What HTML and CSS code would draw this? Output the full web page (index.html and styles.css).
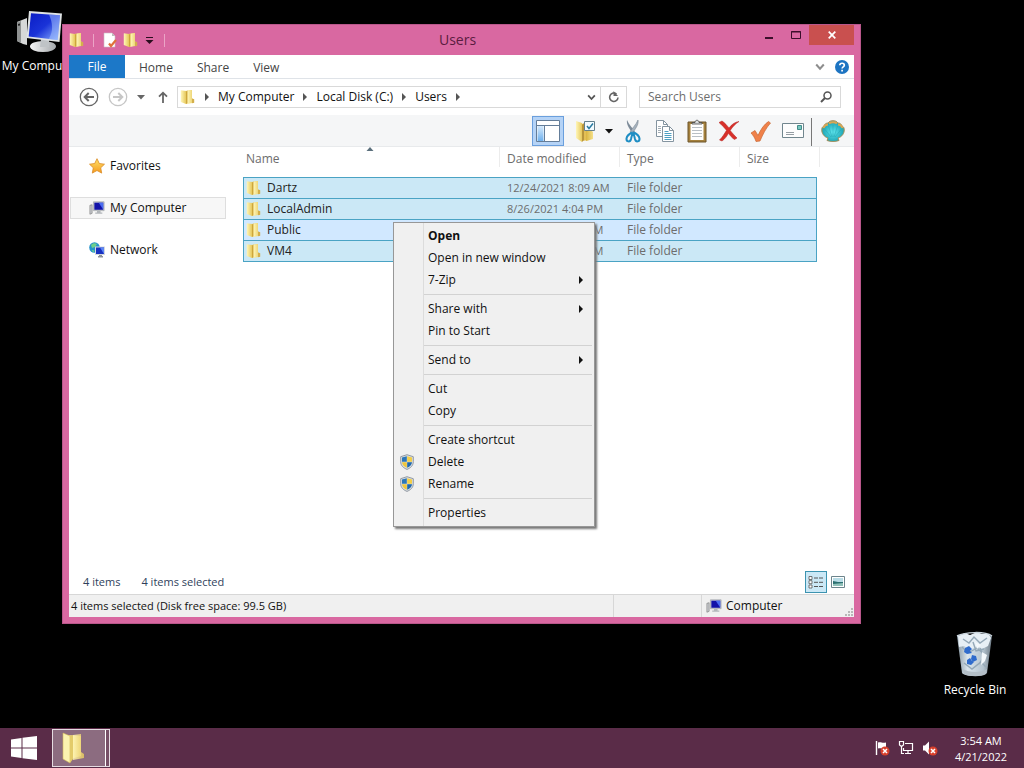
FILE: index.html
```
<!DOCTYPE html>
<html lang="en">
<head>
<meta charset="utf-8">
<title>Users</title>
<link rel="stylesheet" href="styles.css">
</head>
<body>
<svg class="defs" width="0" height="0" aria-hidden="true">
  <defs>
    <linearGradient id="gold" x1="0" x2="1"><stop offset="0" stop-color="#fff6b8"/><stop offset="1" stop-color="#e6c85c"/></linearGradient>
    <linearGradient id="goldDark" x1="0" x2="1"><stop offset="0" stop-color="#d9b440"/><stop offset="1" stop-color="#f4e08a"/></linearGradient>
    <linearGradient id="screen" x1="0" x2="1" y1="0" y2="1"><stop offset="0" stop-color="#0a1cc4"/><stop offset=".5" stop-color="#1a33d8"/><stop offset="1" stop-color="#8fb4ff"/></linearGradient>
    <linearGradient id="metal" x1="0" x2="1"><stop offset="0" stop-color="#f5f5f5"/><stop offset="1" stop-color="#a4a8ac"/></linearGradient>
    <linearGradient id="star" x1="0" x2="0" y1="0" y2="1"><stop offset="0" stop-color="#ffe36b"/><stop offset="1" stop-color="#f59a1f"/></linearGradient>
    <linearGradient id="bin" x1="0" x2="1"><stop offset="0" stop-color="#8797a3"/><stop offset=".3" stop-color="#d9e4ec"/><stop offset=".75" stop-color="#b4c3ce"/><stop offset="1" stop-color="#6d7a85"/></linearGradient>
    <radialGradient id="shell" cx=".5" cy=".55" r=".6"><stop offset="0" stop-color="#5fe6ee"/><stop offset=".7" stop-color="#25adbc"/><stop offset="1" stop-color="#8a9a68"/></radialGradient>
    <linearGradient id="pane" x1="0" x2="0" y1="0" y2="1"><stop offset="0" stop-color="#d5e9fb"/><stop offset="1" stop-color="#6fb1ee"/></linearGradient>
  </defs>
  <symbol id="folder" viewBox="0 0 16 16">
    <path d="M5 2l7-1v12.500l-6 1.500z" fill="#efd778"/>
    <path d="M.8 1.200l5.200.8v13L.8 13z" fill="url(#gold)"/>
    <path d="M6 2.500l1.600-1V14L6 15z" fill="#cda63b"/>
    <path d="M7.600 1.800L12 1v8.500l2 .8v3.400l-6.400 1z" fill="url(#gold)"/>
    <path d="M12 9.500l2.200.8v3.500l-2.200.4z" fill="#d3ae4c"/>
  </symbol>
  <symbol id="computer" viewBox="0 0 18 16">
    <path d="M1 5l2.500-.7v9.700L1 15z" fill="#c9ccd0" stroke="#777" stroke-width=".7"/>
    <path d="M5 1h12v10H5z" fill="#d0d4d8" stroke="#8b9096" stroke-width=".6"/>
    <path d="M6 2h10v8H6z" fill="#1212a8"/><path d="M11 2h5v8z" fill="#4a6cf0"/>
    <path d="M9 11h4v2h2v1.500H7V13h2z" fill="#b2b6ba"/>
  </symbol>
  <symbol id="shield" viewBox="0 0 16 16">
    <path d="M8 .7l6.300 2v5c0 4-2.800 6.300-6.300 7.700C4.500 14 1.700 11.700 1.700 7.700v-5z" fill="#d8dde2" stroke="#7d8790" stroke-width=".8"/>
    <path d="M7.800 2.200v5.600H3V3.600z" fill="#2c77b8"/><path d="M8.200 2.200v5.600H13V3.600z" fill="#f4cf45"/>
    <path d="M3 8.200h4.800v5.600C5 12.500 3.200 11 3 8.200z" fill="#f0c63a"/><path d="M13 8.200H8.200v5.600c2.800-1.300 4.600-2.800 4.800-5.600z" fill="#1f68ad"/>
  </symbol>
  <symbol id="triRight" viewBox="0 0 6 8"><path d="M1 0l4 4-4 4z" fill="currentColor"/></symbol>
  <symbol id="triDown" viewBox="0 0 8 5"><path d="M0 0h8L4 4.500z" fill="currentColor"/></symbol>
  <symbol id="chevron" viewBox="0 0 10 8"><path d="M1.200 1.500L5 5.700l3.800-4.200" fill="none" stroke="currentColor" stroke-width="2"/></symbol>
</svg>

<main class="desktop">
  <a class="shortcut shortcut-computer" href="#computer">
    <svg width="48" height="44" viewBox="0 0 48 44" aria-hidden="true">
      <path d="M1 12l10-4v27l-4-1-6-3z" fill="#d6d8d8"/><path d="M1 12l4-1v22l-4-2z" fill="#8f9292"/><path d="M2 14l2-.5v2l-2 .3z" fill="#222"/>
      <ellipse cx="27" cy="36.500" rx="13" ry="5.500" fill="url(#metal)"/><path d="M25 29l8 1v7h-9z" fill="#bfc3c6"/>
      <path d="M13 1l33 2.500-2.500 28.500-33-4z" fill="#dfe3e5"/><path d="M15 3.200l29 2-2.300 24.800-29-3.500z" fill="url(#screen)"/>
      <path d="M33 4.500l11 .7-2.300 24.800-9-1c5-8 4-16 .3-24.500z" fill="#a9c8ff" opacity=".5"/>
    </svg>
    <span>My Computer</span>
  </a>
  <a class="shortcut shortcut-bin" href="#bin">
    <svg width="40" height="48" viewBox="0 0 40 48" aria-hidden="true">
      <path d="M2 6l5 37c3 4 21 4 25 0l5-37z" fill="url(#bin)"/>
      <path d="M3 6l7-3 5 2 7-3 5 2 7 0 2 4-3 8-6 3-5-3-7 4-6-4-5 1z" fill="#e7eff5"/>
      <path d="M8 9l6 4 5-6 6 6 7-5M7 17l6 6 9-5 8 7M9 33l8 6 9-7 5 5M25 18l4 9-5 7M18 12l3 9 8-2" stroke="#94a8b7" fill="none" stroke-width="1.400"/>
      <path d="M27 22l5 3-2 6-4 4zM20 12l6 3-4 4z" fill="#f3f8fb"/>
      <path d="M10 18l4-2 3 3-2 2 2 2-5 1-3-2zM17 25l4 1 1 4-4 2-2-3zM12 30l3-2 2 3 2 1-3 3-4-1z" fill="#2f6bcc"/>
      <path d="M8 39l1 5c5 3 18 3 22 0l1-5c-5 4-18 4-24 0z" fill="#b4bfc8"/>
      <path d="M2 6c8-4 28-5 35 0" fill="none" stroke="#c9d4dc" stroke-width="1.500"/>
    </svg>
    <span>Recycle Bin</span>
  </a>

  <section class="window">
    <header class="titlebar">
      <div class="quick">
        <svg class="i16" aria-hidden="true"><use href="#folder"/></svg>
        <i class="quick-sep"></i>
        <button aria-label="Properties"><svg class="i16" viewBox="0 0 16 16"><path d="M2 1h8l3 3v11H2z" fill="#fff" stroke="#c9b9c2" stroke-width=".6"/><path d="M10 1l3 3h-3z" fill="#bbb"/><path d="M7 11.500l2 2.500 5-6" fill="none" stroke="#e0703a" stroke-width="2.200"/></svg></button>
        <button aria-label="New folder"><svg class="i16"><use href="#folder"/></svg></button>
        <button aria-label="Customize"><svg width="9" height="8" viewBox="0 0 9 8"><path d="M1 1.500h7" stroke="#2a0d1e"/><path d="M.5 4h8l-4 4z" fill="#2a0d1e"/></svg></button>
        <i class="quick-sep"></i>
      </div>
      <h1 class="title">Users</h1>
      <div class="controls">
        <button class="ctl-min" aria-label="Minimize"><svg width="10" height="10" viewBox="0 0 10 10"><path d="M1 8h8" stroke="#3c0f2b" stroke-width="2"/></svg></button>
        <button class="ctl-max" aria-label="Maximize"><svg width="12" height="10" viewBox="0 0 12 10"><path d="M1.500 1.500h9v7h-9zM1 2h10" fill="none" stroke="#3c0f2b"/></svg></button>
        <button class="ctl-close" aria-label="Close"><svg width="8" height="8" viewBox="0 0 8 8"><path d="M.7.7l6.600 6.600M7.300.7L.7 7.300" stroke="#fff" stroke-width="1.700"/></svg></button>
      </div>
    </header>

    <div class="client">
      <nav class="tabs">
        <button class="tab tab-file">File</button>
        <button class="tab">Home</button>
        <button class="tab">Share</button>
        <button class="tab">View</button>
        <div class="tabs-end">
          <button aria-label="Expand ribbon"><svg class="gray" width="10" height="8"><use href="#chevron"/></svg></button>
          <button aria-label="Help"><svg width="14" height="14" viewBox="0 0 14 14"><circle cx="7" cy="7" r="7" fill="#1d74c2"/><path d="M4.800 5.300C4.800 2.500 9.300 2.600 9.300 5.200c0 1.600-2.200 1.700-2.200 3.300M7.100 9.800v1.800" fill="none" stroke="#fff" stroke-width="1.700"/></svg></button>
        </div>
      </nav>

      <div class="address-row">
        <div class="history">
          <button aria-label="Back"><svg width="20" height="20" viewBox="0 0 20 20" fill="none" stroke="#666"><circle cx="10" cy="10" r="8.700" stroke-width="1.300"/><path d="M15 10H6M9.700 6l-4 4 4 4" stroke-width="2"/></svg></button>
          <button aria-label="Forward"><svg width="20" height="20" viewBox="0 0 20 20" fill="none" stroke="#c6c6c6"><circle cx="10" cy="10" r="8.700" stroke-width="1.300"/><path d="M5 10h9M10.300 6l4 4-4 4" stroke-width="2"/></svg></button>
          <button class="recent" aria-label="Recent locations"><svg width="8" height="5"><use href="#triDown"/></svg></button>
          <button class="up" aria-label="Up"><svg width="10" height="12" viewBox="0 0 10 12" fill="none" stroke="#666"><path d="M5 12V2M1 5.700l4-4 4 4" stroke-width="1.800"/></svg></button>
        </div>
        <div class="address">
          <svg class="i16 address-icon" aria-hidden="true"><use href="#folder"/></svg>
          <svg class="crumb-arrow" width="6" height="8"><use href="#triRight"/></svg>
          <a href="#mc">My Computer</a>
          <svg class="crumb-arrow" width="6" height="8"><use href="#triRight"/></svg>
          <a href="#c">Local Disk (C:)</a>
          <svg class="crumb-arrow" width="6" height="8"><use href="#triRight"/></svg>
          <a href="#users">Users</a>
          <svg class="crumb-arrow" width="6" height="8"><use href="#triRight"/></svg>
          <button class="address-drop" aria-label="Previous locations"><svg width="9" height="7"><use href="#chevron"/></svg></button>
          <button class="refresh" aria-label="Refresh"><svg width="12" height="12" viewBox="0 0 12 12"><path d="M8.500 3A4.200 4.200 0 1 0 10 6.500" fill="none" stroke="#666" stroke-width="1.600"/><path d="M5.500 0v5h4.500z" fill="#666"/></svg></button>
        </div>
        <label class="search">
          <input type="text" placeholder="Search Users" aria-label="Search Users">
          <svg width="12" height="12" viewBox="0 0 12 12" fill="none" stroke="#555"><circle cx="7.500" cy="4.500" r="3.500" stroke-width="1.500"/><path d="M5 7l-4 4" stroke-width="2"/></svg>
        </label>
      </div>

      <div class="toolbar">
        <button class="tool tool-on" aria-label="Navigation pane"><svg width="24" height="22" viewBox="0 0 24 22"><path d="M.5.500h23v21H.500z" fill="#fff" stroke="#647d99"/><path d="M1 5.500h22" stroke="#647d99"/><path d="M1.500 6h6v15h-6z" fill="url(#pane)"/><path d="M8.500 6v15" stroke="#647d99"/></svg></button>
        <button class="tool" aria-label="Select"><svg width="24" height="24" viewBox="0 0 24 24"><path d="M5 4l12 2v15l-9 1z" fill="#e4bf55"/><path d="M3 2l6 2v19l-6-4z" fill="url(#gold)"/><path d="M9 6l2-2v17l-2 2z" fill="#b8953c"/><path d="M13 12h4v-2l3 3v7l-7 2z" fill="url(#goldDark)"/><path d="M11.500 2.500h10v9h-10z" fill="#f3fbff" stroke="#64808c"/><path d="M14 7l2 2.500 4-5" fill="none" stroke="#287aa0" stroke-width="1.500"/></svg></button>
        <button class="tool tool-arrow" aria-label="Select options"><svg width="8" height="5"><use href="#triDown"/></svg></button>
        <button class="tool" aria-label="Cut"><svg width="16" height="24" viewBox="0 0 16 24"><path d="M2 1c-1 5 3 9 6 14l2-2C8 9 4 6 2 1z" fill="#7d8b99"/><path d="M13 1c1 5-3 9-6 14l-2-2c2-4 6-7 8-12z" fill="#a5b1bd" stroke="#6e7a86" stroke-width=".5"/><path d="M7 13.500c-2 1-5 3-5.500 6-.3 3.500 3.700 4 4.500.5.400-2 .8-4 2-6 1.200 2 1.600 4 2 6 .8 3.500 4.800 3 4.500-.5-.5-3-3.500-5-5.500-6" fill="none" stroke="#1f8ec4" stroke-width="2"/></svg></button>
        <button class="tool" aria-label="Copy"><svg width="20" height="24" viewBox="0 0 20 24"><g fill="#fff" stroke="#8494a0"><path d="M1.500 1.500h7l4 4v12h-11z"/><path d="M7.500 7.500h7l4 4v11h-11z"/></g><path d="M8.500 1.500v4h4M14.500 7.500v4h4" fill="none" stroke="#8494a0"/><path d="M3 7.500h3M3 9.500h3M3 11.500h3M3 13.500h3" stroke="#a3adb5"/><path d="M9.500 12.500h4M9.500 14.500h7M9.500 16.500h7M9.500 18.500h7M9.500 20.500h7" stroke="#4d9fc2"/></svg></button>
        <button class="tool" aria-label="Paste"><svg width="20" height="24" viewBox="0 0 20 24"><path d="M1 3h18v20H1z" fill="#a5813d" stroke="#6d542a"/><path d="M3.500 5h13v16h-13z" fill="#fff"/><path d="M5 8.500h10M5 11.500h10M5 14.500h10M5 17.500h10" stroke="#b9c0c6"/><path d="M5 5V3.500h3C8 .500 12 .500 12 3.500h3V5z" fill="#d9dcde" stroke="#444" stroke-width=".8"/></svg></button>
        <button class="tool" aria-label="Delete"><svg width="22" height="22" viewBox="0 0 22 22"><path d="M1 2.500l3-1.500c3 2 5 4.500 7 7 3-4 6-6 10-6.500-4 2.500-6.500 5.500-8.800 9 2.300 2.700 4 4.800 6.800 7.500l-2.500 1.500c-2.500-1.500-4.500-4-6-6.200C9 16 7 19 4 21l-2.500-1c3-3 5-6.300 7-9.700C6 7.500 4 5 1 2.500z" fill="#d8302a" stroke="#b32420" stroke-width=".5"/></svg></button>
        <button class="tool" aria-label="Properties"><svg width="22" height="22" viewBox="0 0 22 22"><path d="M1 13l4-2.500 3 5C11 9 14 4.500 18.500 1.500l2 1.500C16 8 13 14 10 21l-4 .5C5 18 3 15 1 13z" fill="#f0814a" stroke="#c76835" stroke-width=".7"/></svg></button>
        <button class="tool" aria-label="E-mail"><svg width="22" height="16" viewBox="0 0 22 16"><path d="M.500.500h21v14H.500z" fill="#fdfdfd" stroke="#71868e"/><path d="M15.500 2.500h4v4h-4z" fill="#79c8c0" stroke="#438c8a"/><path d="M4 9.500h8M4 11.500h8" stroke="#969ea4"/></svg></button>
        <i class="tool-sep"></i>
        <button class="tool" aria-label="Classic Shell"><svg width="24" height="22" viewBox="0 0 24 22"><path d="M7 18C3 17 .500 13 .700 9.500c.2-2 1-3 2.300-3.500.6-2 2-3 4-3 1.500-2 3-2.300 5-2.300s3.500.3 5 2.300c2 0 3.400 1 4 3 1.300.5 2.100 1.500 2.300 3.500.2 3.500-2.300 7.500-6.300 8.500l1 2.500c-3 1.300-9 1.300-12 0z" fill="url(#shell)" stroke="#a48952" stroke-width=".9"/><path d="M12 17V5M11 17L7.500 6M13 17l3.500-11M10 17L4 9.500M14 17l6-7.500" stroke="#1d9aa9" stroke-width=".4"/><path d="M2.500 8c1-2.500 2.500-3.500 4.500-3.500M8 3.500c2-1.700 6-1.700 8 0M17 4.500c2 0 3.500 1 4.500 3.500" fill="none" stroke="#dba653" stroke-width="1.800"/></svg></button>
      </div>

      <div class="panes">
        <nav class="tree">
          <a class="node" href="#fav"><svg width="16" height="16" viewBox="0 0 16 16"><path d="M8 .7l2.300 4.800 5.200.7-3.800 3.600 1 5.300L8 12.500l-4.700 2.600 1-5.300L.5 6.200l5.200-.7z" fill="url(#star)" stroke="#d98a25" stroke-width=".8"/></svg>Favorites</a>
          <a class="node node-on" href="#mc"><svg width="16" height="16"><use href="#computer"/></svg>My Computer</a>
          <a class="node" href="#net"><svg width="16" height="16" viewBox="0 0 16 16"><circle cx="5.500" cy="5.500" r="5.300" fill="#2593cc"/><path d="M2 3c2-2 4-2 6-1L6 5 3 6zM2.500 8l3 .5-1 2z" fill="#6fd08a"/><path d="M6 4.500h10V13H6z" fill="#d4d8de"/><path d="M7 5.500h8V12H7z" fill="#1830c0"/><path d="M11 5.500h4V12z" fill="#5c86f5"/><path d="M10 13h3v1h1v1.500H9V14h1z" fill="#8d939a"/></svg>Network</a>
        </nav>
        <div class="files">
          <svg class="sort" width="8" height="4" viewBox="0 0 8 4"><path d="M4 0l3.500 4h-7z" fill="#5b6f7c"/></svg>
          <table class="list">
            <colgroup><col><col class="col-mid"><col class="col-mid"><col class="col-size"><col class="col-edge"></colgroup>
            <thead><tr><th>Name</th><th>Date modified</th><th>Type</th><th>Size</th><td></td></tr></thead>
            <tbody>
              <tr><td><span class="name"><svg width="16" height="16"><use href="#folder"/></svg>Dartz</span></td><td class="date">12/24/2021 8:09 AM</td><td>File folder</td><td></td><td></td></tr>
              <tr><td><span class="name"><svg width="16" height="16"><use href="#folder"/></svg>LocalAdmin</span></td><td class="date">8/26/2021 4:04 PM</td><td>File folder</td><td></td><td></td></tr>
              <tr class="focus"><td><span class="name"><svg width="16" height="16"><use href="#folder"/></svg>Public</span></td><td class="date">8/22/2013 8:36 AM</td><td>File folder</td><td></td><td></td></tr>
              <tr><td><span class="name"><svg width="16" height="16"><use href="#folder"/></svg>VM4</span></td><td class="date">4/21/2022 3:50 AM</td><td>File folder</td><td></td><td></td></tr>
            </tbody>
          </table>
        </div>
      </div>

      <div class="details">
        <span>4 items</span><span>4 items selected</span>
        <div class="views">
          <button class="view view-on" aria-label="Details view"><svg width="16" height="13" viewBox="0 0 16 13"><path d="M1 .500h3v3H1zM1 4.700h3v3H1zM1 9h3v3H1z" fill="#fff" stroke="#555" stroke-width=".8"/><path d="M6 2h4m1 0h4M6 6.300h4m1 0h4M6 10.500h4m1 0h4" stroke="#555"/></svg></button>
          <button class="view" aria-label="Thumbnail view"><svg width="14" height="12" viewBox="0 0 14 12"><path d="M.500.500h13v11H.500z" fill="#fff" stroke="#6d858c"/><path d="M2 2h10v8H2z" fill="#b9dce6"/><path d="M2 5l5 1 5 0v4H2z" fill="#2b6f70"/><path d="M2 8l10-1v3H2z" fill="#8fc0b8"/></svg></button>
        </div>
      </div>
      <footer class="status">
        <span class="status-main">4 items selected (Disk free space: 99.5 GB)</span>
        <span class="status-mid"></span>
        <span class="status-zone"><svg width="16" height="16"><use href="#computer"/></svg>Computer</span>
        <svg class="grip" width="9" height="9" viewBox="0 0 9 9"><path d="M6 0h2v2H6zM3 3h2v2H3zM6 3h2v2H6zM0 6h2v2H0zM3 6h2v2H3zM6 6h2v2H6z" fill="#b8b8b8"/></svg>
      </footer>
    </div>
  </section>

  <div class="menu" role="menu">
    <button role="menuitem"><b>Open</b></button>
    <button role="menuitem">Open in new window</button>
    <button role="menuitem">7-Zip<svg class="more" width="6" height="8"><use href="#triRight"/></svg></button>
    <hr>
    <button role="menuitem">Share with<svg class="more" width="6" height="8"><use href="#triRight"/></svg></button>
    <button role="menuitem">Pin to Start</button>
    <hr>
    <button role="menuitem">Send to<svg class="more" width="6" height="8"><use href="#triRight"/></svg></button>
    <hr>
    <button role="menuitem">Cut</button>
    <button role="menuitem">Copy</button>
    <hr>
    <button role="menuitem">Create shortcut</button>
    <button role="menuitem" class="has-icon"><svg width="16" height="16"><use href="#shield"/></svg>Delete</button>
    <button role="menuitem" class="has-icon"><svg width="16" height="16"><use href="#shield"/></svg>Rename</button>
    <hr>
    <button role="menuitem">Properties</button>
  </div>
</main>

<footer class="taskbar">
  <button class="start" aria-label="Start"><svg width="26" height="24" viewBox="0 0 26 24"><path d="M0 3.500l10.500-1.500v9.500H0zM11.500 1.800L26 0v11.500H11.500zM0 12.500h10.500V22L0 20.500zM11.500 12.500H26V24l-14.500-1.800z" fill="#fff"/></svg></button>
  <button class="task" aria-label="Users"><svg width="28" height="32" viewBox="0 0 28 32"><path d="M6 3l14 1v20l-10 3z" fill="#f2e08c"/><path d="M2 1l7 3v27l-7-4z" fill="#fbf3b0" stroke="#d4b858" stroke-width=".6"/><path d="M9 4l3-1v24l-3 4z" fill="#e3cb6a"/><path d="M12 3l8-1v18l3 2v4l-11 2z" fill="url(#gold)" opacity=".85"/></svg></button>
  <div class="tray">
    <button aria-label="Action Center"><svg width="16" height="16" viewBox="0 0 16 16"><path d="M2.500 1v14" stroke="#fff" stroke-width="1.400"/><path d="M4 2.500c3-1 4 1 8 0v6c-4 1-5-1-8 0z" fill="#fff"/><circle cx="11" cy="11" r="4.500" fill="#d8402c"/><path d="M9 9l4 4M13 9l-4 4" stroke="#fff" stroke-width="1.500"/></svg></button>
    <button aria-label="Network"><svg width="16" height="16" viewBox="0 0 16 16" fill="none" stroke="#fff"><path d="M7 3.500h7.500v7H5.500V8M7 13.500h6M10 10.500v3M3.500 6v7.500H6" stroke-width="1.200"/><path d="M1.500 1.500h4V5l-2 1.500L1.500 5z" stroke-width="1.200"/></svg></button>
    <button aria-label="Volume muted"><svg width="16" height="16" viewBox="0 0 16 16"><path d="M1 5.500h2L7 1.500v13L3 10.500H1z" fill="#fff"/><circle cx="11" cy="11" r="4.500" fill="#d8402c"/><path d="M9 9l4 4M13 9l-4 4" stroke="#fff" stroke-width="1.500"/></svg></button>
    <button class="clock"><span>3:54 AM</span><span>4/21/2022</span></button>
  </div>
</footer>
</body>
</html>
```
FILE: styles.css
```
* { box-sizing: border-box; }
body {
  margin: 0;
  min-height: 100vh;
  display: flex;
  flex-direction: column;
  background: #000;
  color: #111;
  font: 12px/16px "Open Sans", "Noto Sans", sans-serif;
}
button {
  display: flex;
  align-items: center;
  justify-content: center;
  margin: 0;
  padding: 0;
  border: 0;
  background: none;
  color: inherit;
  font: inherit;
}
a { color: inherit; text-decoration: none; }
svg { display: block; flex: none; }
.defs { position: absolute; }
.i16 { width: 16px; height: 16px; }

.desktop { position: relative; flex: 1; overflow: hidden; }
.shortcut {
  position: absolute;
  display: flex;
  flex-direction: column;
  align-items: center;
  gap: 4px;
  width: 76px;
  color: #fff;
  white-space: nowrap;
}
.shortcut-computer { left: 2px; top: 10px; }
.shortcut-bin { right: 11px; bottom: 30px; }

.window {
  position: absolute;
  top: 24px;
  right: 163px;
  bottom: 104px;
  left: 62px;
  display: flex;
  flex-direction: column;
  padding: 0 6px 6px;
  border: 1px solid #b9578b;
  background: #d968a1;
}
.titlebar { display: grid; grid-template-columns: 1fr auto 1fr; height: 30px; }
.quick { display: flex; align-items: center; }
.quick-sep { width: 1px; height: 13px; margin: 0 8px; background: #eba4c6; }
.quick button { margin-right: 5px; }
.quick button + button + button { margin: 0 2px 0 1px; }
.title { margin: 5px 8px 0 0; font-size: 14px; line-height: 20px; font-weight: 400; color: #5a1c40; }
.controls { display: flex; justify-content: flex-end; }
.controls button { height: 20px; }
.ctl-min, .ctl-max { width: 27px; }
.controls .ctl-close { width: 45px; background: #c9504f; }

.client { flex: 1; display: flex; flex-direction: column; min-height: 0; background: #fff; }
.tabs { display: flex; height: 24px; border-bottom: 1px solid #dfe3e8; }
.tab { padding: 2px 12px 0; color: #444; }
.tab-file { width: 56px; margin-right: 2px; padding: 0; background: #1c78c8; color: #fff; }
.tabs-end { display: flex; gap: 10px; margin-left: auto; padding-right: 5px; }
.gray { color: #8d8d8d; }

.address-row { display: flex; gap: 12px; padding: 7px 13px 7px 10px; }
.history { display: flex; align-items: center; gap: 9px; color: #666; }
.history .up { margin-left: 4px; }
.address {
  flex: 1;
  display: flex;
  align-items: center;
  gap: 8px;
  height: 22px;
  padding-left: 2px;
  border: 1px solid #d9d9d9;
}
.history + .address { margin-left: -3px; }
.crumb-arrow { color: #555; }
.address-drop { margin-left: auto; color: #555; }
.address .refresh { align-self: stretch; margin-left: -4px; width: 26px; border-left: 1px solid #d9d9d9; }
.search { flex: 0 0 202px; display: flex; align-items: center; height: 22px; padding: 0 8px; border: 1px solid #d9d9d9; }
.search input { flex: 1; min-width: 0; padding: 0; border: 0; outline: 0; background: none; font: inherit; }
.search input::placeholder { color: #6d6d6d; opacity: 1; }

.toolbar { display: flex; align-items: flex-end; justify-content: flex-end; height: 32px; padding-right: 5px; background: #f5f6f7; border-bottom: 1px solid #e8eaec; }
.tool { width: 32px; height: 30px; }
.tool-on { margin-right: 5px; background: #b5d3f6; border: 1px solid #6a9fdd; }
.tool-arrow { width: 16px; }
.tool-sep { width: 1px; height: 28px; margin: 0 5px 0 2px; background: #777; }

.panes { flex: 1; display: flex; min-height: 0; }
.tree { flex: 0 0 158px; display: flex; flex-direction: column; gap: 20px; padding: 8px 1px; }
.node { display: flex; align-items: center; gap: 5px; height: 22px; padding-left: 18px; border: 1px solid transparent; }
.node-on { background: #f7f7f7; border-color: #dedede; }
.files { position: relative; flex: 1; padding: 0 34px 0 16px; }
.sort { position: absolute; left: 139px; top: 0; }
.list { width: 100%; table-layout: fixed; border-collapse: separate; border-spacing: 0; color: #6d6d6d; }
.col-mid { width: 120px; }
.col-size { width: 77px; }
.col-edge { width: 3px; }
.list th, .list td { padding: 0 0 0 7px; text-align: left; font-weight: 400; white-space: nowrap; }
.list th:first-child { padding-left: 3px; }
.list tbody td:first-child { padding-left: 2px; }
.list td:last-child { padding: 0; }
.list thead th, .list thead td { height: 20px; line-height: 16px; vertical-align: bottom; border-right: 1px solid #ececec; }
.list thead th:nth-child(4) { border-right: 0; }
.list thead::after { content: ""; display: block; height: 10px; }
.list tbody td { height: 21px; border-top: 1px solid #4aa3c4; background: #cbe8f6; }
.list tbody tr:last-child td { height: 22px; border-bottom: 1px solid #4aa3c4; }
.list tbody td:first-child { border-left: 1px solid #4aa3c4; }
.list tbody td:nth-child(4) { border-right: 1px solid #4aa3c4; }
.list tbody .focus td { background: #d1e8ff; }
.list tbody tr td:last-child { border: 0; background: none; }
.list .date { font-size: 11px; }
.name { display: flex; align-items: center; gap: 5px; color: #222; }

.details { display: flex; align-items: center; gap: 21px; height: 24px; padding: 0 5px 0 14px; font-size: 11px; color: #2f3f5c; }
.views { display: flex; margin-left: auto; }
.view { width: 22px; height: 22px; }
.view-on { border: 1px solid #3c93b0; background: #cbe8f6; }
.status { display: flex; height: 23px; background: #f0f0f0; border-top: 1px solid #d7d7d7; }
.status span { display: flex; align-items: center; }
.status-main { flex: 1; padding-left: 2px; font-size: 11px; }
.status-mid { width: 89px; border: solid #d7d7d7; border-width: 0 1px; }
.status-zone { width: 143px; gap: 4px; padding-left: 4px; }
.grip { align-self: flex-end; }

.menu {
  position: absolute;
  left: 393px;
  top: 222px;
  width: 202px;
  padding: 2px;
  border: 1px solid #979797;
  background: linear-gradient(90deg, #f0f0f0 29px, #dcdcdc 29px 30px, #f0f0f0 30px);
  box-shadow: 2px 2px 2px #777;
  color: #111;
}
.menu button { width: 100%; height: 22px; justify-content: flex-start; padding: 0 8px 0 32px; }
.menu .has-icon { gap: 13px; padding-left: 3px; }
.menu .more { margin-left: auto; }
.menu hr { height: 1px; margin: 3px 0 3px 28px; border: 0; background: #d2d2d2; }

.taskbar { display: flex; height: 40px; background: #5a2c48; color: #fff; }
.start { width: 48px; }
.task { width: 58px; margin: 1px 0 1px 4px; padding: 0 12px 0 0; border: 1px solid #e5dce2; background: linear-gradient(90deg, #8c6c80 52px, #fff 52px 53px, #775067 53px); }
.tray { display: flex; align-items: center; gap: 8px; margin-left: auto; padding-right: 8px; }
.clock { flex-direction: column; width: 70px; padding-top: 2px; font-size: 11px; }
```
